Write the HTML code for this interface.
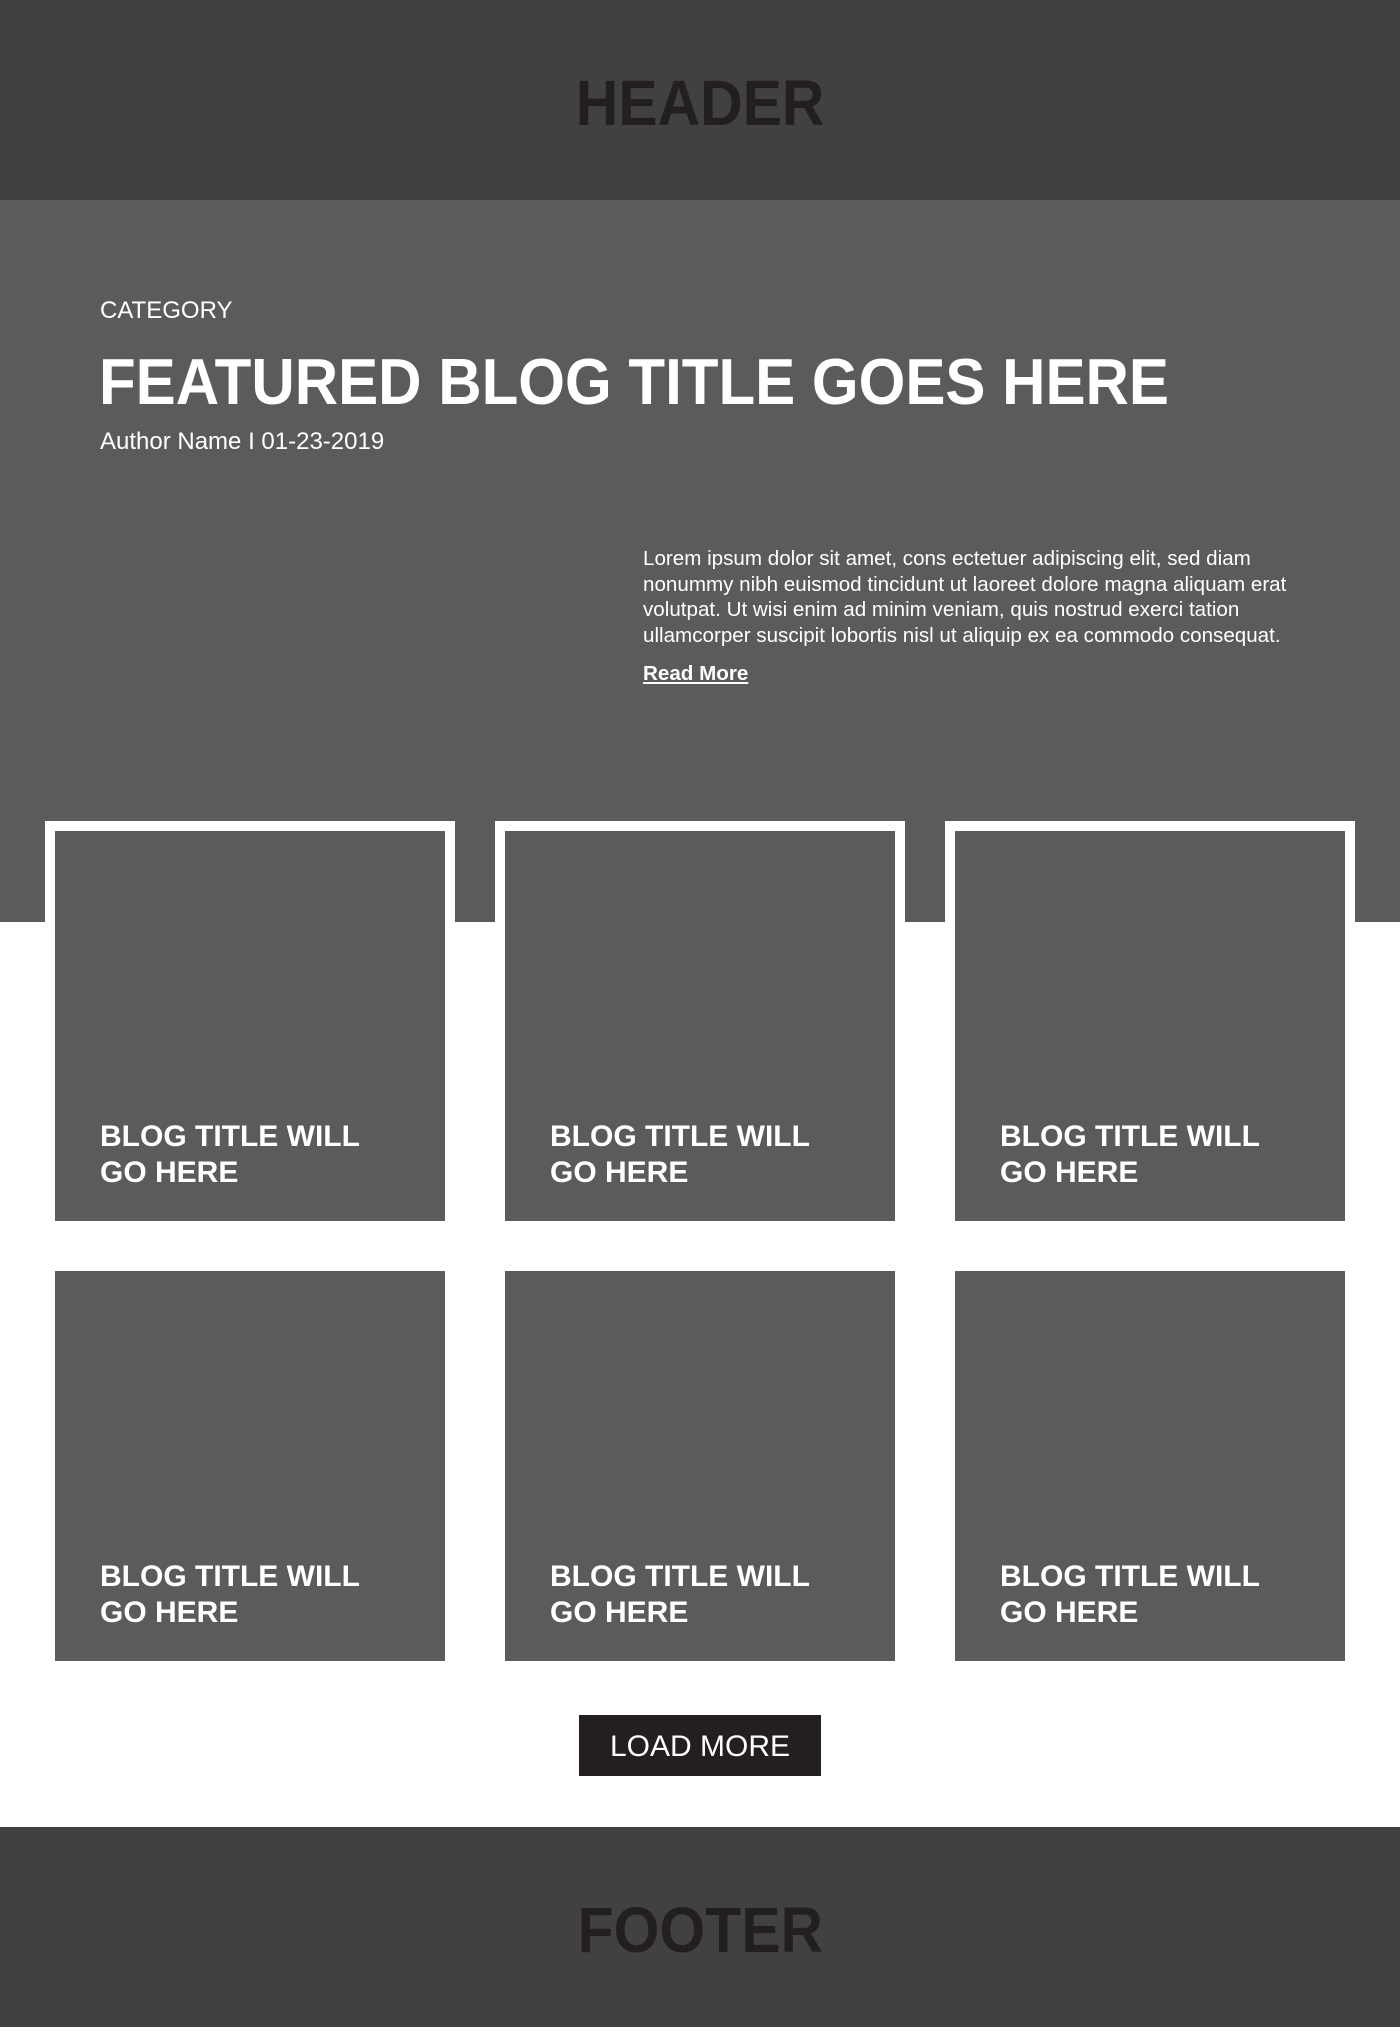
<!DOCTYPE html>
<html><head><style>
*{margin:0;padding:0;box-sizing:border-box}
body{width:1400px;height:2027px;background:#fff;font-family:"Liberation Sans",Arial,sans-serif;position:relative;overflow:hidden}
.abs{position:absolute}
.header,.footer{left:0;width:1400px;height:200px;background:#414042;color:#231f20;font-weight:bold;font-size:64px;text-align:center;line-height:206px}
.header span,.footer span{display:inline-block;transform:scaleX(0.92)}
.hero{left:0;top:200px;width:1400px;height:722px;background:#5a5b5d}
.frame{background:#fff;top:821px;width:410px;height:101px}
.card{background:#5a5b5d;width:390px;height:390px}
.card span{position:absolute;left:45px;top:288px;color:#fff;font-weight:bold;font-size:30px;line-height:36px}
.w{color:#fff}
</style></head><body>
<div class="abs header" style="top:0"><span>HEADER</span></div>
<div class="abs hero"></div>
<div class="abs w" style="left:100px;top:297px;font-size:24px">CATEGORY</div>
<div class="abs w" style="left:99px;top:343px;font-size:65px;font-weight:bold;line-height:78px;transform:scaleX(0.924);transform-origin:0 0;white-space:nowrap">FEATURED BLOG TITLE GOES HERE</div>
<div class="abs w" style="left:100px;top:428px;font-size:24px">Author Name I 01-23-2019</div>
<div class="abs w" style="left:643px;top:546px;width:700px;font-size:20.6px;line-height:25.5px">Lorem ipsum dolor sit amet, cons ectetuer adipiscing elit, sed diam<br>nonummy nibh euismod tincidunt ut laoreet dolore magna aliquam erat<br>volutpat. Ut wisi enim ad minim veniam, quis nostrud exerci tation<br>ullamcorper suscipit lobortis nisl ut aliquip ex ea commodo consequat.</div>
<div class="abs w" style="left:643px;top:662px;font-size:20.6px;font-weight:bold;text-decoration:underline">Read More</div>
<div class="abs frame" style="left:45px"></div>
<div class="abs frame" style="left:495px"></div>
<div class="abs frame" style="left:945px"></div>
<div class="abs card" style="left:55px;top:831px"><span>BLOG TITLE WILL<br>GO HERE</span></div>
<div class="abs card" style="left:505px;top:831px"><span>BLOG TITLE WILL<br>GO HERE</span></div>
<div class="abs card" style="left:955px;top:831px"><span>BLOG TITLE WILL<br>GO HERE</span></div>
<div class="abs card" style="left:55px;top:1271px"><span>BLOG TITLE WILL<br>GO HERE</span></div>
<div class="abs card" style="left:505px;top:1271px"><span>BLOG TITLE WILL<br>GO HERE</span></div>
<div class="abs card" style="left:955px;top:1271px"><span>BLOG TITLE WILL<br>GO HERE</span></div>
<div class="abs" style="left:579px;top:1715px;width:242px;height:61px;background:#231f20;color:#fff;font-size:30px;line-height:63px;text-align:center">LOAD MORE</div>
<div class="abs footer" style="top:1827px"><span>FOOTER</span></div>
</body></html>
